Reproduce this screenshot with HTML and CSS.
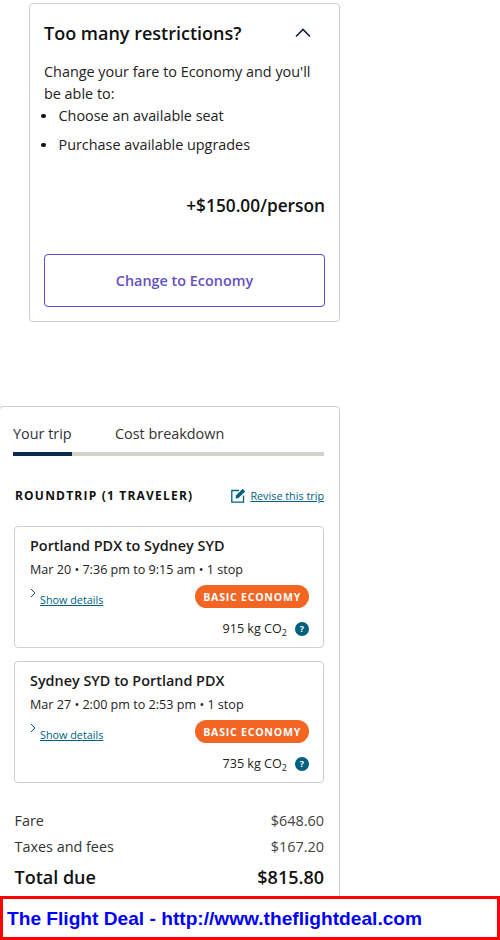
FILE: index.html
```html
<!DOCTYPE html>
<html lang="en">
<head>
<meta charset="utf-8">
<title>Trip summary</title>
<link rel="stylesheet" href="styles.css">
</head>
<body>
<div class="page">
  <section class="upsell">
    <div class="upsell-head">
      <h2>Too many restrictions?</h2>
      <svg class="chev-up" width="16" height="10" viewBox="0 0 16 10"><path d="M1 8.5 8 1.5l7 7" fill="none" stroke="#0c2340" stroke-width="1.6"/></svg>
    </div>
    <p class="upsell-text">Change your fare to Economy and you'll be able to:</p>
    <ul class="upsell-list">
      <li>Choose an available seat</li>
      <li>Purchase available upgrades</li>
    </ul>
    <div class="upsell-price">+$150.00/person</div>
    <a class="upsell-btn">Change to Economy</a>
  </section>

  <section class="trip">
    <div class="tabs">
      <span class="tab tab-active">Your trip</span>
      <span class="tab tab-other">Cost breakdown</span>
    </div>
    <div class="trip-head">
      <h3>ROUNDTRIP (1 TRAVELER)</h3>
      <a class="revise">
        <svg width="15" height="15" viewBox="0 0 15 15"><path d="M8 2.5H.8v11.7h11.7V7.5" fill="none" stroke="#00607f" stroke-width="1.3"/><path d="M4.6 10.4 5 7.6 11.6.8l2.6 2.6-6.7 6.6z" fill="#00607f"/></svg>
        <span>Revise this trip</span>
      </a>
    </div>

    <article class="leg">
      <h4>Portland PDX to Sydney SYD</h4>
      <p class="leg-time">Mar 20 • 7:36 pm to 9:15 am • 1 stop</p>
      <div class="leg-row">
        <a class="details"><svg width="6" height="10" viewBox="0 0 6 10"><path d="M1 1l4 4-4 4" fill="none" stroke="#00607f" stroke-width="1"/></svg><span>Show details</span></a>
        <span class="badge">BASIC ECONOMY</span>
      </div>
      <div class="co2">915 kg CO<sub>2</sub><span class="help">?</span></div>
    </article>

    <article class="leg">
      <h4>Sydney SYD to Portland PDX</h4>
      <p class="leg-time">Mar 27 • 2:00 pm to 2:53 pm • 1 stop</p>
      <div class="leg-row">
        <a class="details"><svg width="6" height="10" viewBox="0 0 6 10"><path d="M1 1l4 4-4 4" fill="none" stroke="#00607f" stroke-width="1"/></svg><span>Show details</span></a>
        <span class="badge">BASIC ECONOMY</span>
      </div>
      <div class="co2">735 kg CO<sub>2</sub><span class="help">?</span></div>
    </article>

    <div class="cost cost-first"><span>Fare</span><span>$648.60</span></div>
    <div class="cost"><span>Taxes and fees</span><span>$167.20</span></div>
    <div class="total"><span>Total due</span><span>$815.80</span></div>
  </section>

  <footer class="deal">The Flight Deal - http://www.theflightdeal.com</footer>
</div>
</body>
</html>
```

FILE: styles.css
```css
* { box-sizing: border-box; }
html, body { margin: 0; padding: 0; background: #fff; }
body { font-family: "Open Sans", sans-serif; color: #1a1a1a; width: 500px; height: 940px; overflow: hidden; }
.page { padding-top: 3px; display: flex; flex-direction: column; }

.upsell {
  width: 311px; height: 319px; margin-left: 29px;
  border: 1px solid #cfcfcf; border-radius: 4px;
  padding: 14px 14px 14px 14px;
  display: flex; flex-direction: column;
}
.upsell-head { display: flex; justify-content: space-between; align-items: center; height: 30px; padding-right: 14px; }
.upsell-head h2 { margin: 0; font-size: 18px; font-weight: 600; color: #111; line-height: 30px; }
.upsell-text { margin: 13px 0 0; font-size: 14.4px; line-height: 22px; color: #222; }
.upsell-list { margin: 0 0 0 -3px; padding: 0; list-style: none; font-size: 14.4px; line-height: 22px; color: #222; }
.upsell-list li { margin-bottom: 7px; display: flex; align-items: center; gap: 13px; }
.upsell-list li::before { content: ""; width: 4.5px; height: 4.5px; border-radius: 50%; background: #111; flex: none; }
.upsell-price { margin-top: 32px; text-align: right; font-size: 17.3px; font-weight: 600; color: #111; line-height: 22px; }
.upsell-btn {
  margin-top: 37px; height: 53px; border: 1px solid #5f49bd; border-radius: 4px;
  display: flex; align-items: center; justify-content: center;
  font-size: 14.4px; font-weight: 600; color: #6650bf;
}

.trip {
  width: 341px; height: 520px; margin-top: 84px; margin-left: -1px;
  border: 1px solid #cfcfcf; border-radius: 4px;
  padding: 13px 15px 0 13px;
}
.tabs { display: flex; height: 36px; border-bottom: 4px solid #d4d4cf; }
.tab { font-size: 14.4px; line-height: 28px; color: #333; height: 36px; }
.tab-active { width: 59px; border-bottom: 4px solid #0c2a4d; color: #2a3340; }
.tab-other { margin-left: 43px; }

.trip-head { display: flex; justify-content: space-between; align-items: center; margin-top: 29px; padding-left: 2px; height: 20px; }
.trip-head h3 { margin: 0; font-size: 12px; font-weight: 700; letter-spacing: 1.2px; color: #111; }
.revise { display: flex; align-items: center; gap: 4px; font-size: 10.8px; color: #00607f; }
.revise span, .details span { text-decoration: underline; }

.leg {
  margin-top: 21px; margin-left: 1px; width: 310px; height: 122px;
  border: 1px solid #cfcfcf; border-radius: 4px;
  padding: 9px 14px 0 15px;
}
.leg + .leg { margin-top: 13px; }
.leg h4 { margin: 0; font-size: 14.4px; font-weight: 600; color: #1a1a1a; line-height: 20px; }
.leg-time { margin: 4px 0 0; font-size: 12.6px; line-height: 20px; color: #222; }
.leg-row { display: flex; justify-content: space-between; align-items: flex-start; margin-top: 5px; height: 23px; }
.details { display: flex; align-items: flex-start; gap: 4px; font-size: 10.8px; color: #00607f; padding-top: 7px; line-height: 15px; }
.details svg { margin-top: -4px; }
.badge {
  background: #f26522; color: #fff; font-size: 10.6px; font-weight: 700; letter-spacing: 0.75px;
  height: 23px; line-height: 24px; padding: 0 8px; border-radius: 12px; white-space: nowrap;
}
.co2 { display: flex; justify-content: flex-end; align-items: center; margin-top: 11px; font-size: 12.6px; line-height: 20px; color: #222; }
.co2 sub { font-size: 9px; line-height: 0; position: relative; top: 4px; vertical-align: baseline; margin-left: 0; }
.help {
  width: 14px; height: 14px; margin-left: 8px; border-radius: 50%;
  background: #00607f; color: #fff; font-size: 9px; font-weight: 700; line-height: 14px; text-align: center;
}

.cost { display: flex; justify-content: space-between; font-size: 14.4px; line-height: 20px; color: #333; height: 26px; padding-left: 1.5px; }
.cost-first { margin-top: 28px; }
.cost span:last-child { color: #444; }
.total { display: flex; justify-content: space-between; font-size: 18px; font-weight: 600; line-height: 24px; color: #111; padding-left: 1.5px; margin-top: 1.5px; }

.deal {
  position: absolute; left: 0; top: 896px; width: 500px; height: 44px;
  border: 3px solid #f00; background: #fff;
  font-family: "Liberation Sans", Arial, sans-serif; font-size: 19.15px; font-weight: 700; color: #00f;
  line-height: 40px; padding-left: 4px;
}
```
